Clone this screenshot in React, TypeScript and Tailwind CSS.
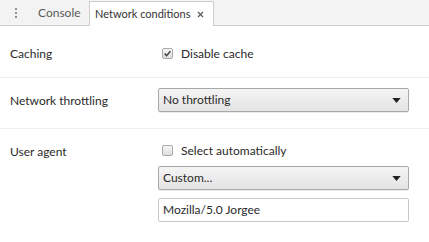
import { X } from "lucide-react"

function Checkbox({ checked }: { checked: boolean }) {
  return (
    <span className="flex h-[11px] w-[11px] items-center justify-center rounded-[2px] border border-[#a9a9a9] bg-gradient-to-b from-[#f6f6f6] to-[#dedede]">
      {checked && (
        <svg viewBox="0 0 10 10" className="h-[9px] w-[9px]">
          <path d="M1.8 5.2 L4 7.4 L8.2 2.4" fill="none" stroke="#4a4a4a" strokeWidth="1.8" />
        </svg>
      )}
    </span>
  )
}

function Select({ label }: { label: string }) {
  return (
    <div className="flex h-[24px] w-[251px] items-center justify-between rounded-[2px] border border-[#a8a8a8] bg-gradient-to-b from-[#f4f4f4] to-[#e4e4e4] pl-[4px] pr-[7px] shadow-[0_1px_0_rgba(0,0,0,0.08)]">
      <span>{label}</span>
      <svg viewBox="0 0 10 6" className="h-[5px] w-[9px]">
        <path d="M0 0 H10 L5 6 Z" fill="#222" />
      </svg>
    </div>
  )
}

export default function App() {
  return (
    <div className="h-[242px] w-[429px] overflow-hidden bg-white text-[12px] text-[#2a2a2a] [font-family:Lato,sans-serif]">
      <div className="flex h-[26px] items-end border-b border-[#cdcdcd] bg-[#f3f3f3]">
        <div className="flex h-[25px] w-[32px] shrink-0 flex-col items-center justify-center gap-[2px]">
          <span className="h-[2px] w-[2px] rounded-full bg-[#6e6e6e]" />
          <span className="h-[2px] w-[2px] rounded-full bg-[#6e6e6e]" />
          <span className="h-[2px] w-[2px] rounded-full bg-[#6e6e6e]" />
        </div>
        <div className="flex h-[25px] w-[57px] shrink-0 items-center pl-[6px] text-[#5a5a5a]">Console</div>
        <div className="-mb-px flex h-[25px] w-[125px] shrink-0 items-center justify-between whitespace-nowrap border-x border-t border-[#cdcdcd] bg-white pl-[5px] pr-[8px] text-[11px] text-[#333]">
          <span>Network conditions</span>
          <X className="h-[9px] w-[9px] text-[#555]" strokeWidth={3} />
        </div>
      </div>

      <div className="flex h-[52px] items-center border-b border-[#ececec] pl-[10px] pt-[4px]">
        <span className="w-[152px]">Caching</span>
        <label className="flex items-center gap-[8px]">
          <Checkbox checked />
          <span>Disable cache</span>
        </label>
      </div>

      <div className="flex h-[51px] items-start border-b border-[#ececec] pl-[10px] pt-[10px]">
        <span className="flex h-[25px] w-[148px] items-center">Network throttling</span>
        <Select label="No throttling" />
      </div>

      <div className="flex pl-[10px] pt-[14px]">
        <span className="w-[148px]">User agent</span>
        <div className="flex flex-col">
          <label className="flex h-[15px] items-center gap-[8px] pl-[4px]">
            <Checkbox checked={false} />
            <span>Select automatically</span>
          </label>
          <div className="mt-[8px]">
            <Select label="Custom..." />
          </div>
          <div className="mt-[8px] flex h-[24px] w-[251px] items-center rounded-[2px] border border-[#c8c8c8] bg-white px-[4px]">
            Mozilla/5.0 Jorgee
          </div>
        </div>
      </div>
    </div>
  )
}
